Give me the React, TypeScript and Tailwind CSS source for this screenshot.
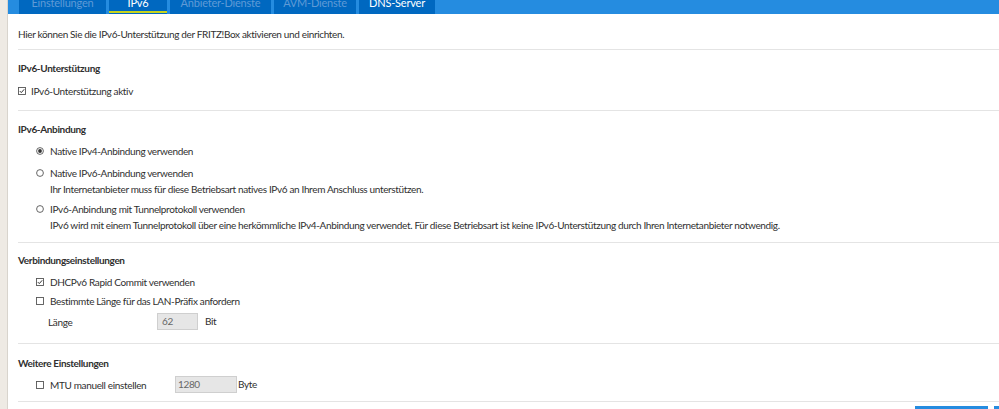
const tabs = [
  { label: "Einstellungen", width: "w-[87px]", active: false, light: false },
  { label: "IPv6", width: "w-[58px]", active: true, light: true },
  { label: "Anbieter-Dienste", width: "w-[101px]", active: false, light: false },
  { label: "AVM-Dienste", width: "w-[82px]", active: false, light: false },
  { label: "DNS-Server", width: "w-[76px]", active: false, light: true },
]

function CheckBox({ checked }: { checked?: boolean }) {
  return (
    <svg width="8" height="8" viewBox="0 0 8 8" className="shrink-0">
      <rect x="0.5" y="0.5" width="7" height="7" fill="white" stroke="#555" strokeWidth="0.9" />
      {checked && (
        <path d="M1.8 4.1 L3.3 5.6 L6.2 2.3" fill="none" stroke="#333" strokeWidth="1" />
      )}
    </svg>
  )
}

function Radio({ checked }: { checked?: boolean }) {
  return (
    <svg width="8" height="8" viewBox="0 0 8 8" className="shrink-0">
      <circle cx="4" cy="4" r="3.4" fill="white" stroke="#555" strokeWidth="0.9" />
      {checked && <circle cx="4" cy="4" r="1.9" fill="#333" />}
    </svg>
  )
}

function Divider() {
  return <div className="h-px bg-[#e4e4e4]" />
}

export default function App() {
  return (
    <div
      className="flex h-[409px] w-[999px] overflow-hidden bg-white text-[10px] tracking-[-0.35px] text-[#2f2f2f]"
      style={{ fontFamily: "Lato, 'Liberation Sans', sans-serif" }}
    >
      <div className="w-[8px] shrink-0 border-r border-[#d8d4cd] bg-[#eeeae4]" />

      <div className="flex min-w-0 flex-1 flex-col">
        <div className="flex h-[14px] shrink-0 gap-[3px] bg-[#258ce0] pl-[11px] text-[11px] tracking-[-0.2px]">
          {tabs.map((tab) => (
            <div
              key={tab.label}
              className={`relative flex h-[14px] items-start justify-center overflow-hidden bg-[#0068c0] ${tab.width}`}
            >
              <span
                className={`-mt-[4px] leading-[14px] ${tab.light ? "text-white" : "text-[#5f9ad6]"}`}
              >
                {tab.label}
              </span>
              {tab.active && (
                <div className="absolute bottom-[1px] left-0 right-0 h-[2px] bg-[#c8d41c]" />
              )}
            </div>
          ))}
        </div>

        <div className="pl-[10px]">
          <p className="pt-[13px] pb-[8px] leading-[14px]">
            Hier können Sie die IPv6-Unterstützung der FRITZ!Box aktivieren und einrichten.
          </p>
          <Divider />

          <section className="pt-[11px] pb-[12px]">
            <h3 className="font-bold leading-[14px]">IPv6-Unterstützung</h3>
            <label className="mt-[9px] flex items-center gap-[5px] leading-[14px]">
              <CheckBox checked />
              IPv6-Unterstützung aktiv
            </label>
          </section>
          <Divider />

          <section className="pt-[11px] pb-[10px]">
            <h3 className="font-bold leading-[14px]">IPv6-Anbindung</h3>
            <div className="mt-[8px] flex flex-col pl-[18px]">
              <label className="flex items-center gap-[6px] leading-[14px]">
                <Radio checked />
                Native IPv4-Anbindung verwenden
              </label>
              <div className="mt-[8px]">
                <label className="flex items-center gap-[6px] leading-[14px]">
                  <Radio />
                  Native IPv6-Anbindung verwenden
                </label>
                <p className="mt-[2px] pl-[14px] leading-[14px]">
                  Ihr Internetanbieter muss für diese Betriebsart natives IPv6 an Ihrem Anschluss unterstützen.
                </p>
              </div>
              <div className="mt-[6px]">
                <label className="flex items-center gap-[6px] leading-[14px]">
                  <Radio />
                  IPv6-Anbindung mit Tunnelprotokoll verwenden
                </label>
                <p className="mt-[2px] pl-[14px] leading-[14px]">
                  IPv6 wird mit einem Tunnelprotokoll über eine herkömmliche IPv4-Anbindung verwendet. Für diese Betriebsart ist keine IPv6-Unterstützung durch Ihren Internetanbieter notwendig.
                </p>
              </div>
            </div>
          </section>
          <Divider />

          <section className="pt-[10px] pb-[13px]">
            <h3 className="font-bold leading-[14px]">Verbindungseinstellungen</h3>
            <div className="mt-[8px] flex flex-col gap-[5px] pl-[18px]">
              <label className="flex items-center gap-[6px] leading-[14px]">
                <CheckBox checked />
                DHCPv6 Rapid Commit verwenden
              </label>
              <label className="flex items-center gap-[6px] leading-[14px]">
                <CheckBox />
                Bestimmte Länge für das LAN-Präfix anfordern
              </label>
              <div className="flex items-center pl-[12px]">
                <span className="w-[109px] leading-[14px]">Länge</span>
                <div className="flex h-[17px] w-[41px] items-center border border-[#cfcfcf] bg-[#e6e6e6] px-[4px] text-[#666]">
                  62
                </div>
                <span className="ml-[7px]">Bit</span>
              </div>
            </div>
          </section>
          <Divider />

          <section className="pt-[12px] pb-[8px]">
            <h3 className="font-bold leading-[14px]">Weitere Einstellungen</h3>
            <div className="mt-[6px] flex items-center pl-[18px]">
              <label className="flex w-[139px] items-center gap-[6px] leading-[14px]">
                <CheckBox />
                MTU manuell einstellen
              </label>
              <div className="flex h-[17px] w-[62px] items-center border border-[#cfcfcf] bg-[#e6e6e6] px-[2px] text-[#666]">
                1280
              </div>
              <span className="ml-[1px]">Byte</span>
            </div>
          </section>
          <Divider />

          <div className="flex justify-end gap-[6px] pt-[4px]">
            <div className="h-[4px] w-[73px] bg-[#258ce0]" />
            <div className="h-[4px] w-[5px] bg-[#258ce0]" />
          </div>
        </div>
      </div>
    </div>
  )
}
